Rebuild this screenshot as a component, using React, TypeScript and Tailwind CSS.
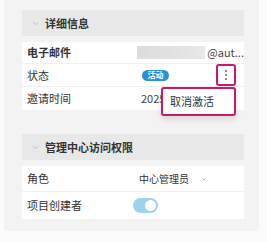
import { ChevronDown } from "lucide-react";

const font = { fontFamily: '"Noto Sans CJK SC", "Noto Sans", sans-serif' };

function SectionHeader({ title }: { title: string }) {
  return (
    <div className="flex h-[26px] items-center bg-[#e8e8e8] pl-[9px]">
      <ChevronDown className="h-[9px] w-[9px] text-[#a5a5a5]" strokeWidth={1.5} />
      <span className="ml-[5px] text-[11px] font-bold text-[#333]">{title}</span>
    </div>
  );
}

export default function App() {
  return (
    <div className="h-[242px] w-[267px] bg-[#fbfbfb] text-[#333]" style={font}>
      <div className="ml-[4px] h-[231px] w-[255px] bg-[#f3f3f3] pl-[18px] pr-[15px] pt-[10px]">
        <SectionHeader title="详细信息" />

        <div className="relative mt-[6px] bg-white text-[11px]">
          <div className="flex h-[22px] items-center border-b border-[#f0f0f0] pl-[5px]">
            <span className="w-[112px] font-bold">电子邮件</span>
            <div className="h-[13px] w-[69px] bg-gradient-to-r from-[#dcdcdc] to-[#e8e8e8]" />
            <span className="ml-[2px] text-[#444]">@aut...</span>
          </div>
          <div className="flex h-[23px] items-center border-b border-[#f0f0f0] pl-[5px]">
            <span className="w-[115px]">状态</span>
            <span className="flex h-[11px] w-[27px] items-center justify-center rounded-full bg-[#2b8fd6] text-[8px] font-bold leading-none text-white">
              活动
            </span>
            <div className="ml-[47px] flex h-[22px] w-[20px] flex-col items-center justify-center gap-[2px] rounded-[3px] border-2 border-[#c8186f]">
              <span className="h-[2px] w-[2px] rounded-full bg-[#666]" />
              <span className="h-[2px] w-[2px] rounded-full bg-[#666]" />
              <span className="h-[2px] w-[2px] rounded-full bg-[#666]" />
            </div>
          </div>
          <div className="flex h-[23px] items-center pl-[5px]">
            <span className="w-[114px]">邀请时间</span>
            <span className="text-[#444]">2025</span>
          </div>

          <div className="absolute left-[139px] top-[45px] flex h-[29px] w-[75px] items-center rounded-[3px] border-2 border-[#c8186f] bg-white pl-[7px] shadow-[0_3px_6px_rgba(0,0,0,0.12)]">
            <span className="text-[11px]">取消激活</span>
          </div>
        </div>

        <div className="mt-[24px]">
          <SectionHeader title="管理中心访问权限" />
        </div>

        <div className="mt-[6px] bg-white text-[11px]">
          <div className="flex h-[26px] items-center border-b border-[#f0f0f0] pl-[5px]">
            <span className="w-[112px]">角色</span>
            <span className="text-[10px]">中心管理员</span>
            <ChevronDown className="ml-[11px] h-[8px] w-[8px] text-[#888]" strokeWidth={1.5} />
          </div>
          <div className="flex h-[27px] items-center pl-[5px]">
            <span className="w-[106px]">项目创建者</span>
            <div className="flex h-[15px] w-[25px] items-center justify-end rounded-full bg-[#9fd0ef] pr-[2px]">
              <span className="h-[11px] w-[11px] rounded-full bg-white" />
            </div>
          </div>
        </div>
      </div>
    </div>
  );
}
